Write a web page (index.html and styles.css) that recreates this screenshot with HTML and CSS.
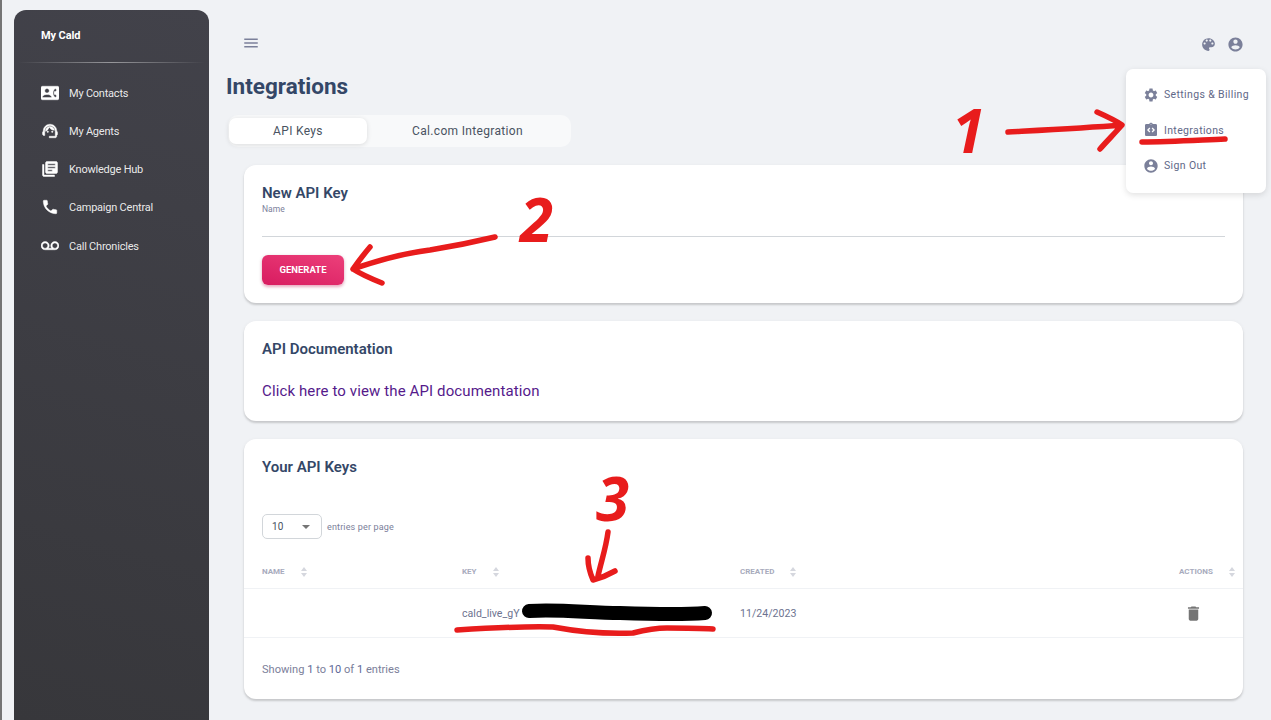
FILE: index.html
```html
<!DOCTYPE html>
<html lang="en">
<head>
  <meta charset="UTF-8" />
  <meta name="viewport" content="width=device-width, initial-scale=1" />
  <title>Integrations - My Cald</title>
  <link rel="stylesheet" href="styles.css">
</head>
<body>

  <aside class="sidebar">
    <div class="brand">My Cald</div>
    <div class="sidebar-line"></div>
    <nav class="side-nav">
      <a class="side-link">
        <svg class="side-icon" viewBox="0 0 24 24"><path d="M22 3H2C.9 3 0 3.9 0 5v14c0 1.1.9 2 2 2h20c1.1 0 1.99-.9 1.99-2L24 5c0-1.1-.9-2-2-2zM8 6c1.66 0 3 1.34 3 3s-1.34 3-3 3-3-1.34-3-3 1.34-3 3-3zm6 12H2v-1c0-2 4-3.1 6-3.1s6 1.1 6 3.1v1zm3.85-4h1.64L21 16l-1.99 1.99c-1.31-.98-2.28-2.38-2.73-3.99-.18-.64-.28-1.31-.28-2s.1-1.36.28-2c.45-1.62 1.42-3.01 2.73-3.99L21 8l-1.51 2h-1.64c-.22.63-.35 1.3-.35 2s.13 1.37.35 2z"/></svg>
        My Contacts
      </a>
      <a class="side-link">
        <svg class="side-icon" viewBox="0 0 24 24"><path d="M21 12.22C21 6.73 16.74 3 12 3c-4.69 0-9 3.65-9 9.28-.6.34-1 .98-1 1.72v2c0 1.1.9 2 2 2h1v-6.1c0-3.87 3.13-7 7-7s7 3.13 7 7V19h-8v2h8c1.1 0 2-.9 2-2v-1.22c.59-.31 1-.92 1-1.61v-2.3c0-.67-.41-1.28-1-1.65z"/><circle cx="9" cy="13" r="1"/><circle cx="15" cy="13" r="1"/><path d="M18 11.03C17.52 8.18 15.04 6 12.05 6c-3.03 0-6.29 2.51-6.03 6.45 2.47-1.01 4.33-3.21 4.86-5.89 1.31 2.63 4 4.44 7.12 4.47z"/></svg>
        My Agents
      </a>
      <a class="side-link">
        <svg class="side-icon" viewBox="0 0 24 24"><path d="M4 6H2v14c0 1.1.9 2 2 2h14v-2H4V6zm16-4H8c-1.1 0-2 .9-2 2v12c0 1.1.9 2 2 2h12c1.1 0 2-.9 2-2V4c0-1.1-.9-2-2-2zm-1 9H9V9h10v2zm-4 4H9v-2h6v2zm4-8H9V5h10v2z"/></svg>
        Knowledge Hub
      </a>
      <a class="side-link">
        <svg class="side-icon" viewBox="0 0 24 24"><path d="M6.62 10.79c1.44 2.83 3.76 5.14 6.59 6.59l2.2-2.2c.27-.27.67-.36 1.02-.24 1.12.37 2.33.57 3.57.57.55 0 1 .45 1 1V20c0 .55-.45 1-1 1-9.39 0-17-7.61-17-17 0-.55.45-1 1-1h3.5c.55 0 1 .45 1 1 0 1.25.2 2.45.57 3.57.11.35.03.74-.25 1.02l-2.2 2.2z"/></svg>
        Campaign Central
      </a>
      <a class="side-link">
        <svg class="side-icon" viewBox="0 0 24 24"><path d="M18.5 6C15.46 6 13 8.46 13 11.5c0 1.33.47 2.55 1.26 3.5H9.74c.79-.95 1.26-2.17 1.26-3.5C11 8.46 8.54 6 5.5 6S0 8.46 0 11.5 2.46 17 5.5 17h13c3.04 0 5.5-2.46 5.5-5.5S21.54 6 18.5 6zm-13 9C3.57 15 2 13.43 2 11.5S3.57 8 5.5 8 9 9.57 9 11.5 7.43 15 5.5 15zm13 0c-1.93 0-3.5-1.57-3.5-3.5S16.57 8 18.5 8 22 9.57 22 11.5 20.43 15 18.5 15z"/></svg>
        Call Chronicles
      </a>
    </nav>
  </aside>

  <main class="main">
    <header class="topbar">
      <svg class="menu-btn" viewBox="0 0 24 24"><path d="M3 18h18v-2H3v2zm0-5h18v-2H3v2zm0-7v2h18V6H3z"/></svg>
      <div class="top-icons">
        <svg class="top-icon" viewBox="0 0 24 24"><path d="M12 3c-4.97 0-9 4.03-9 9s4.03 9 9 9c.83 0 1.5-.67 1.5-1.5 0-.39-.15-.74-.39-1.01-.23-.26-.38-.61-.38-.99 0-.83.67-1.5 1.5-1.5H16c2.76 0 5-2.24 5-5 0-4.42-4.03-8-9-8zm-5.5 9c-.83 0-1.5-.67-1.5-1.5S5.67 9 6.5 9 8 9.67 8 10.5 7.33 12 6.5 12zm3-4C8.67 8 8 7.33 8 6.5S8.67 5 9.5 5s1.5.67 1.5 1.5S10.33 8 9.5 8zm5 0c-.83 0-1.5-.67-1.5-1.5S13.67 5 14.5 5s1.5.67 1.5 1.5S15.33 8 14.5 8zm3 4c-.83 0-1.5-.67-1.5-1.5S16.67 9 17.5 9s1.5.67 1.5 1.5-.67 1.5-1.5 1.5z"/></svg>
        <svg class="top-icon" viewBox="0 0 24 24"><path d="M12 2C6.48 2 2 6.48 2 12s4.48 10 10 10 10-4.48 10-10S17.52 2 12 2zm0 3c1.66 0 3 1.34 3 3s-1.34 3-3 3-3-1.34-3-3 1.34-3 3-3zm0 14.2c-2.5 0-4.71-1.28-6-3.22.03-1.99 4-3.08 6-3.08 1.99 0 5.97 1.09 6 3.08-1.29 1.94-3.5 3.22-6 3.22z"/></svg>
      </div>
    </header>

    <h1 class="page-title">Integrations</h1>

    <div class="tabs">
      <div class="tab active">API Keys</div>
      <div class="tab">Cal.com Integration</div>
    </div>

    <section class="card card-new">
      <h2>New API Key</h2>
      <label class="field-label">Name</label>
      <div class="field-line"></div>
      <button class="btn-generate" type="button">Generate</button>
    </section>

    <section class="card card-docs">
      <h2>API Documentation</h2>
      <a class="docs-link">Click here to view the API documentation</a>
    </section>

    <section class="card card-keys">
      <h2>Your API Keys</h2>
      <div class="per-page">
        <div class="per-select">10<span class="caret"></span></div>
        <span>entries per page</span>
      </div>
      <table class="keys-table">
        <colgroup>
          <col class="col-name"><col class="col-key"><col class="col-created"><col class="col-actions">
        </colgroup>
        <thead>
          <tr>
            <th><span class="th-label">Name</span><span class="sort"></span></th>
            <th><span class="th-label">Key</span><span class="sort"></span></th>
            <th><span class="th-label">Created</span><span class="sort"></span></th>
            <th><span class="th-label">Actions</span><span class="sort"></span></th>
          </tr>
        </thead>
        <tbody>
          <tr>
            <td></td>
            <td>cald_live_gY</td>
            <td>11/24/2023</td>
            <td><svg class="trash" viewBox="0 0 24 24"><path d="M6 19c0 1.1.9 2 2 2h8c1.1 0 2-.9 2-2V7H6v12zM19 4h-3.5l-1-1h-5l-1 1H5v2h14V4z"/></svg></td>
          </tr>
        </tbody>
      </table>
      <div class="showing">Showing <b>1</b> to <b>10</b> of <b>1</b> entries</div>
    </section>
  </main>

  <div class="user-menu">
    <a class="menu-item">
      <svg viewBox="0 0 24 24"><path d="M19.14 12.94c.04-.3.06-.61.06-.94 0-.32-.02-.64-.07-.94l2.03-1.58c.18-.14.23-.41.12-.61l-1.92-3.32c-.12-.22-.37-.29-.59-.22l-2.39.96c-.5-.38-1.03-.7-1.62-.94l-.36-2.54c-.04-.24-.24-.41-.48-.41h-3.84c-.24 0-.43.17-.47.41l-.36 2.54c-.59.24-1.13.57-1.62.94l-2.39-.96c-.22-.08-.47 0-.59.22L2.74 8.87c-.12.21-.08.47.12.61l2.03 1.58c-.05.3-.09.63-.09.94s.02.64.07.94l-2.03 1.58c-.18.14-.23.41-.12.61l1.92 3.32c.12.22.37.29.59.22l2.39-.96c.5.38 1.03.7 1.62.94l.36 2.54c.05.24.24.41.48.41h3.84c.24 0 .44-.17.47-.41l.36-2.54c.59-.24 1.13-.56 1.62-.94l2.39.96c.22.08.47 0 .59-.22l1.92-3.32c.12-.22.07-.47-.12-.61l-2.01-1.58zM12 15.6c-1.98 0-3.6-1.62-3.6-3.6s1.62-3.6 3.6-3.6 3.6 1.62 3.6 3.6-1.62 3.6-3.6 3.6z"/></svg>
      Settings &amp; Billing
    </a>
    <a class="menu-item">
      <svg viewBox="0 0 24 24"><path d="M19 3h-4.18C14.4 1.84 13.3 1 12 1c-1.3 0-2.4.84-2.82 2H5c-1.1 0-2 .9-2 2v14c0 1.1.9 2 2 2h14c1.1 0 2-.9 2-2V5c0-1.1-.9-2-2-2zm-7-.25c.41 0 .75.34.75.75s-.34.75-.75.75-.75-.34-.75-.75.34-.75.75-.75zM11 14.17l-1.41 1.42L6 12l3.59-3.59L11 9.83 8.83 12 11 14.17zm3.41 1.42L13 14.17 15.17 12 13 9.83l1.41-1.42L18 12l-3.59 3.59z"/></svg>
      Integrations
    </a>
    <a class="menu-item">
      <svg viewBox="0 0 24 24"><path d="M12 2C6.48 2 2 6.48 2 12s4.48 10 10 10 10-4.48 10-10S17.52 2 12 2zm0 3c1.66 0 3 1.34 3 3s-1.34 3-3 3-3-1.34-3-3 1.34-3 3-3zm0 14.2c-2.5 0-4.71-1.28-6-3.22.03-1.99 4-3.08 6-3.08 1.99 0 5.97 1.09 6 3.08-1.29 1.94-3.5 3.22-6 3.22z"/></svg>
      Sign Out
    </a>
  </div>

  <!-- hand drawn markup on top of the screenshot -->
  <svg class="markup" viewBox="0 0 1271 720">
    <path class="blot" d="M529 611 C560 609 590 613 620 613 C650 614 680 615 705 613"/>
    <path class="ink" d="M1008 132 C1045 130 1085 128 1122 125 M1097 112 C1106 116 1115 120 1122 125 C1115 133 1107 141 1100 149"/>
    <path class="ink" d="M1142 142 C1170 142 1200 140 1225 139"/>
    <path class="ink" d="M495 237 C470 243 455 246 430 250 C405 253 385 258 353 269 M370 247 C364 254 358 262 353 269 C362 275 372 279 382 283"/>
    <path class="ink" d="M608 532 C606 548 601 562 598 576 M588 558 C588 566 590 573 593 580 C601 578 608 575 615 571"/>
    <path class="ink" d="M457 630 C490 628 525 626 553 627 C580 632 610 634 633 633 C645 630 655 628 667 628 C682 628 698 628 713 629"/>
  </svg>
  <span class="note note-1">1</span>
  <span class="note note-2">2</span>
  <span class="note note-3">3</span>

</body>
</html>
```

FILE: styles.css
```css
* {
  box-sizing: border-box;
}

html, body {
  height: 720px;
  overflow: hidden;
}

body {
  margin: 0;
  display: flex;
  align-items: stretch;
  background: #f0f2f5;
  border-left: 2px solid #757575;
  font-family: Roboto, sans-serif;
  color: #7b809a;
}

/* sidebar */
.sidebar {
  width: 195px;
  flex-shrink: 0;
  margin: 10px 0 0 12px;
  background: linear-gradient(195deg, #42424a, #37373b);
  border-radius: 12px 12px 0 0;
  color: #fff;
}

.brand {
  padding: 19px 0 0 27px;
  height: 52px;
  font-size: 11px;
  line-height: 13px;
  font-weight: 700;
  letter-spacing: -0.1px;
}

.sidebar-line {
  height: 1px;
  margin: 0 4px;
  background: linear-gradient(to right, rgba(255, 255, 255, 0), rgba(255, 255, 255, 0.45), rgba(255, 255, 255, 0));
}

.side-nav {
  display: flex;
  flex-direction: column;
  padding-top: 11px;
}

.side-link {
  display: flex;
  align-items: center;
  height: 38px;
  padding-left: 27px;
  font-size: 11px;
  letter-spacing: -0.22px;
  color: rgba(255, 255, 255, 0.9);
}

.side-link:last-child {
  margin-top: 1px;
}

.side-icon {
  width: 18px;
  height: 18px;
  margin-right: 10px;
  fill: #fff;
  stroke: #fff;
  stroke-width: 0.6;
}

/* main column */
.main {
  flex: 1;
  min-width: 0;
  padding: 0 28px 0 17px;
}

.topbar {
  display: flex;
  justify-content: space-between;
  align-items: center;
  height: 86px;
  margin-bottom: -16px;
  padding: 0 27px 0 17px;
  margin-right: -28px;
}

.menu-btn {
  width: 18px;
  height: 18px;
  margin-left: -1px;
  fill: #7b809a;
}

.top-icons {
  display: flex;
  gap: 10px;
  margin-top: 2px;
}

.top-icon {
  width: 17px;
  height: 17px;
  fill: #7b809a;
}

.page-title {
  margin: 0;
  height: 45px;
  font-size: 22.5px;
  line-height: 32px;
  font-weight: 700;
  color: #344767;
}

.tabs {
  display: flex;
  width: 343px;
  height: 32px;
  margin: 0 0 18px 2px;
  padding: 3px 1px;
  background: #f8f9fa;
  border-radius: 10px;
}

.tab {
  display: flex;
  justify-content: center;
  align-items: center;
  flex: 1;
  height: 26px;
  padding-right: 2px;
  font-size: 12px;
  letter-spacing: 0.33px;
  color: #495361;
}

.tab.active {
  flex: 0 0 138px;
  padding-right: 0;
  background: #fff;
  border-radius: 7px;
  box-shadow: 0 1px 5px rgba(0, 0, 0, 0.12);
}

/* cards */
.card {
  margin: 0 0 18px 18px;
  padding: 0 18px;
  background: #fff;
  border-radius: 12px;
  box-shadow: 0 2px 2px rgba(0, 0, 0, 0.14), 0 1px 4px rgba(0, 0, 0, 0.06);
}

.card h2 {
  margin: 0;
  font-size: 15px;
  line-height: 20px;
  font-weight: 600;
  color: #344767;
}

.card-new {
  height: 138px;
  padding-top: 18px;
}

.field-label {
  display: block;
  margin-top: 1px;
  font-size: 8.5px;
  line-height: 10px;
  color: #7b809a;
}

.field-line {
  height: 1px;
  margin-top: 22px;
  background: #d2d6da;
}

.btn-generate {
  display: block;
  width: 82px;
  height: 30px;
  margin-top: 18px;
  padding: 0 0 2px;
  border: none;
  border-radius: 6px;
  background: linear-gradient(195deg, #ec407a, #d81b60);
  box-shadow: 0 2px 3px rgba(233, 30, 99, 0.3), 0 1px 4px rgba(0, 0, 0, 0.12);
  color: #fff;
  font-family: Roboto, sans-serif;
  font-size: 9.5px;
  font-weight: 700;
  text-transform: uppercase;
}

.card-docs {
  height: 100px;
  padding-top: 18px;
}

.docs-link {
  display: block;
  margin-top: 22px;
  font-size: 15px;
  line-height: 20px;
  letter-spacing: 0.12px;
  color: #551a8b;
}

.card-keys {
  height: 260px;
  padding-top: 18px;
  margin-bottom: 0;
}

.per-page {
  display: flex;
  align-items: center;
  gap: 5px;
  margin-top: 37px;
  font-size: 9px;
  letter-spacing: 0.15px;
  color: #7b809a;
}

.per-select {
  position: relative;
  width: 60px;
  height: 25px;
  padding-left: 9px;
  border: 1px solid #d2d6da;
  border-radius: 5px;
  font-size: 10px;
  line-height: 23px;
  color: #495361;
}

.caret {
  position: absolute;
  top: 10px;
  right: 11px;
  border-left: 4.5px solid transparent;
  border-right: 4.5px solid transparent;
  border-top: 4px solid #757575;
}

/* api keys table */
.keys-table {
  width: 999px;
  margin: 16px -18px 0;
  border-collapse: collapse;
  table-layout: fixed;
}

.col-name { width: 200px; }
.col-key { width: 278px; }
.col-created { width: 439px; }
.col-actions { width: 82px; }

.keys-table th {
  height: 33px;
  padding: 1px 0 0 18px;
  border-bottom: 1px solid #f0f2f5;
  text-align: left;
  font-size: 8px;
  font-weight: 700;
  color: #a8abbd;
  white-space: nowrap;
}

.th-label {
  text-transform: uppercase;
}

.sort {
  display: inline-block;
  position: relative;
  width: 6px;
  height: 10px;
  margin-left: 16px;
  vertical-align: middle;
}

.sort::before, .sort::after {
  content: "";
  position: absolute;
  left: 0;
  border-left: 3px solid transparent;
  border-right: 3px solid transparent;
}

.sort::before {
  top: 0;
  border-bottom: 4px solid #d5d7de;
}

.sort::after {
  bottom: 0;
  border-top: 4px solid #d5d7de;
}

.keys-table td {
  height: 49px;
  padding: 1px 0 0 18px;
  border-bottom: 1px solid #f0f2f5;
  font-size: 10.6px;
  color: #6d7390;
}

.trash {
  display: block;
  width: 19px;
  height: 19px;
  margin-left: 4.5px;
  fill: #757575;
}

.showing {
  margin-top: 25px;
  font-size: 11.1px;
  line-height: 14px;
  color: #7b809a;
}

.showing b {
  font-weight: 400;
  color: #5c6796;
}

/* dropdown over the page */
.user-menu {
  position: absolute;
  top: 69px;
  left: 1126px;
  width: 140px;
  height: 124px;
  padding-top: 8px;
  background: #fff;
  border-radius: 7px;
  box-shadow: 0 2px 6px rgba(0, 0, 0, 0.12);
}

.menu-item {
  display: flex;
  align-items: center;
  height: 35.5px;
  padding-left: 17px;
  font-size: 10.5px;
  letter-spacing: 0.36px;
  color: #5f6888;
}

.menu-item svg {
  width: 16px;
  height: 16px;
  margin-right: 5px;
  fill: #7b809a;
}

/* red markup */
.markup {
  position: absolute;
  top: 0;
  left: 0;
  width: 1271px;
  height: 720px;
  pointer-events: none;
}

.ink {
  fill: none;
  stroke: #e81c1c;
  stroke-width: 5.5;
  stroke-linecap: round;
  stroke-linejoin: round;
}

.blot {
  fill: none;
  stroke: #000;
  stroke-width: 14;
  stroke-linecap: round;
}

.note {
  position: absolute;
  font-family: "Open Sans", sans-serif;
  font-size: 60px;
  line-height: 60px;
  font-weight: 700;
  font-style: italic;
  color: #e81c1c;
}

.note-1 { left: 952px; top: 100px; }
.note-2 { left: 520px; top: 189px; }
.note-3 { left: 596px; top: 468px; }
```
